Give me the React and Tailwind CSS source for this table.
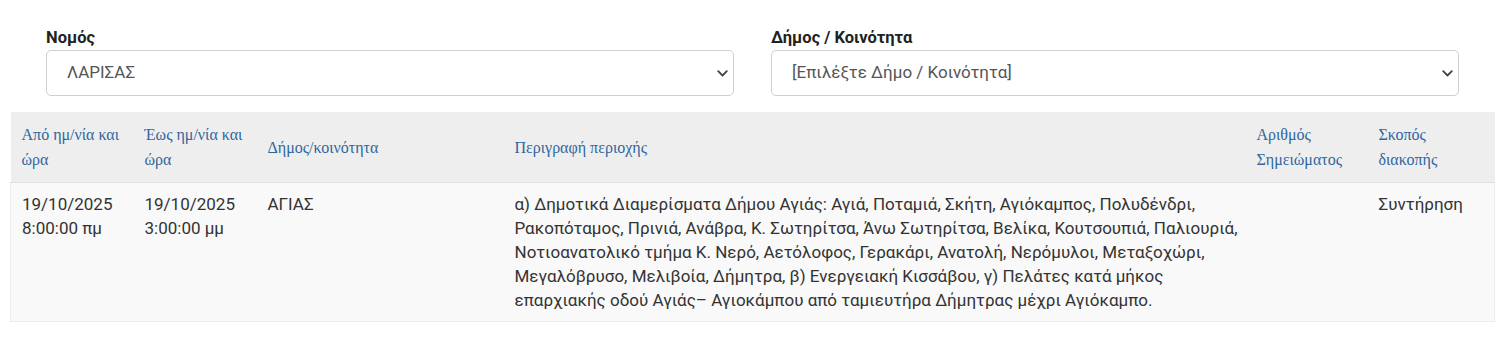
import React from "react";

function Chevron() {
  return (
    <svg width="11" height="7" viewBox="0 0 11 7" fill="none" className="shrink-0">
      <path d="M1.2 1.2l4.3 4.3 4.3-4.3" stroke="#444" strokeWidth="1.8" strokeLinecap="round" strokeLinejoin="round" />
    </svg>
  );
}

function Field({ label, value }) {
  return (
    <div className="flex flex-col">
      <label className="text-[16.5px] leading-[20px] font-bold text-[#222] mb-[2px]" style={{ fontFamily: "Roboto, sans-serif" }}>
        {label}
      </label>
      <div className="h-[46px] border border-[#cfcfcf] rounded-[5px] bg-white flex items-center justify-between pl-[20px] pr-[5px]">
        <span className="text-[17px] text-[#555]" style={{ fontFamily: "Roboto, sans-serif" }}>{value}</span>
        <Chevron />
      </div>
    </div>
  );
}

const serif = { fontFamily: '"Liberation Serif", "DejaVu Serif", serif' };

export default function App() {
  const th = "px-[11px] py-[10px] text-left align-middle font-normal text-[16px] leading-[25px] text-[#2f66a0]";
  const td = "px-[11px] py-[9px] align-top text-[17px] leading-[24px] text-[#333]";
  return (
    <div className="bg-white w-[1500px] h-[342px]" style={{ fontFamily: "Roboto, sans-serif" }}>
      <div className="grid grid-cols-2 gap-[37px] pl-[46px] pr-[41px] pt-[28px]">
        <Field label="Νομός" value="ΛΑΡΙΣΑΣ" />
        <Field label="Δήμος / Κοινότητα" value="[Επιλέξτε Δήμο / Κοινότητα]" />
      </div>
      <div className="pl-[10px] pr-[6px] mt-[16px]">
        <table className="w-[1484px] table-fixed border-collapse">
          <colgroup>
            <col className="w-[123px]" />
            <col className="w-[123px]" />
            <col className="w-[247px]" />
            <col className="w-[742px]" />
            <col className="w-[122px]" />
            <col className="w-[127px]" />
          </colgroup>
          <thead>
            <tr className="bg-[#eeeeee] border-b border-[#e0e0e0]">
              <th className={th} style={serif}>Από ημ/νία και<br />ώρα</th>
              <th className={th} style={serif}>Έως ημ/νία και<br />ώρα</th>
              <th className={th} style={serif}>Δήμος/κοινότητα</th>
              <th className={th} style={serif}>Περιγραφή περιοχής</th>
              <th className={th} style={serif}>Αριθμός<br />Σημειώματος</th>
              <th className={th} style={serif}>Σκοπός<br />διακοπής</th>
            </tr>
          </thead>
          <tbody>
            <tr className="bg-[#f9f9f9] border border-[#ececec]">
              <td className={td}>19/10/2025<br />8:00:00 πμ</td>
              <td className={td}>19/10/2025<br />3:00:00 μμ</td>
              <td className={td}>ΑΓΙΑΣ</td>
              <td className={td + " whitespace-nowrap"}>
                α) Δημοτικά Διαμερίσματα Δήμου Αγιάς: Αγιά, Ποταμιά, Σκήτη, Αγιόκαμπος, Πολυδένδρι,<br />
                Ρακοπόταμος, Πρινιά, Ανάβρα, Κ. Σωτηρίτσα, Άνω Σωτηρίτσα, Βελίκα, Κουτσουπιά, Παλιουριά,<br />
                Νοτιοανατολικό τμήμα Κ. Νερό, Αετόλοφος, Γερακάρι, Ανατολή, Νερόμυλοι, Μεταξοχώρι,<br />
                Μεγαλόβρυσο, Μελιβοία, Δήμητρα, β) Ενεργειακή Κισσάβου, γ) Πελάτες κατά μήκος<br />
                επαρχιακής οδού Αγιάς– Αγιοκάμπου από ταμιευτήρα Δήμητρας μέχρι Αγιόκαμπο.
              </td>
              <td className={td}></td>
              <td className={td}>Συντήρηση</td>
            </tr>
          </tbody>
        </table>
      </div>
    </div>
  );
}
